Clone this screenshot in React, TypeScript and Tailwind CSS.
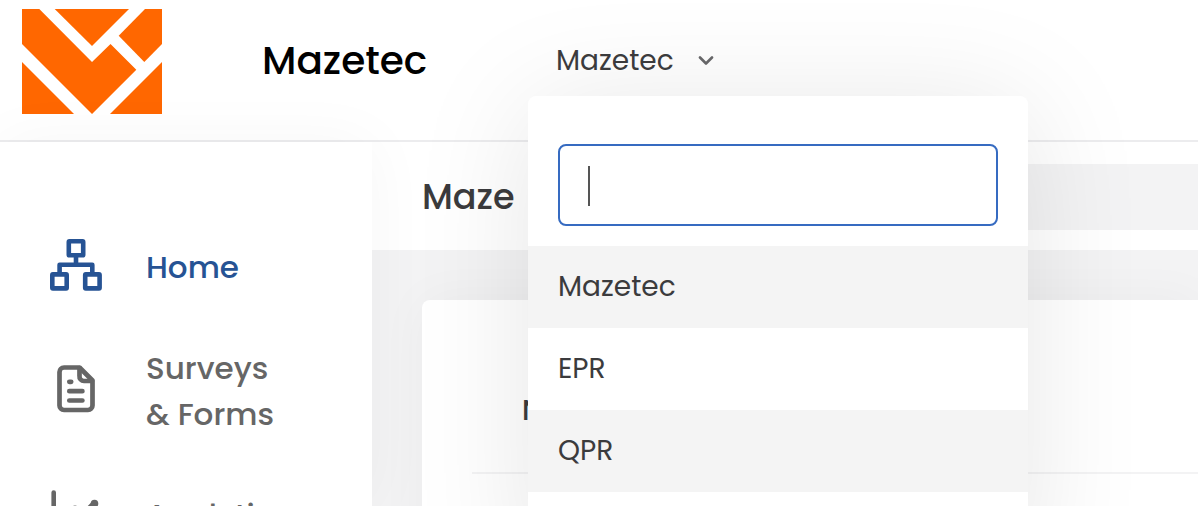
import React, { useState } from "react";

type NavItem = {
  label: string;
  icon: React.ReactNode;
  active?: boolean;
};

const WORKSPACES = ["Mazetec", "EPR", "QPR"];

const Logo: React.FC = () => (
  <svg width="140" height="106" viewBox="0 -1 140 106" fill="#ff6700" aria-label="Mazetec logo">
    <path d="M0 0H17.3L70 53L88.5 35L114.3 60.7L70 105L0 35Z" />
    <path d="M32.7 0H107L70 37Z" />
    <path d="M123 0H140V35L122.3 53L96.7 26.7Z" />
    <path d="M0 53L52 105H0Z" />
    <path d="M140 53V105H88Z" />
  </svg>
);

const HomeIcon: React.FC = () => (
  <svg width="52" height="56" viewBox="0 0 52 56" fill="none" stroke="currentColor" strokeWidth="4.6" strokeLinejoin="round">
    <rect x="18.8" y="2.3" width="14.4" height="14" rx="0.6" />
    <rect x="2.3" y="35.4" width="14.4" height="14" rx="0.6" />
    <rect x="35.2" y="35.4" width="14.4" height="14" rx="0.6" />
    <path d="M26 17V25.8M9.6 35V25.8H42.3V35" />
  </svg>
);

const FormIcon: React.FC = () => (
  <svg width="52" height="56" viewBox="0 0 52 56" fill="none" stroke="currentColor" strokeWidth="4.7" strokeLinecap="round" strokeLinejoin="round">
    <path d="M29.5 4.5H14A4.5 4.5 0 0 0 9.5 9V42.5A4.5 4.5 0 0 0 14 47H38A4.5 4.5 0 0 0 42.5 42.5V17.5Z" />
    <path d="M29.5 5V13A4.5 4.5 0 0 0 34 18H42" />
    <path d="M19.3 18.8H21.2M19.3 28.2H32.4M19.3 37.5H32.4" />
  </svg>
);

const ChartIcon: React.FC = () => (
  <svg width="52" height="56" viewBox="0 0 52 56" fill="none" stroke="currentColor" strokeWidth="4.6" strokeLinecap="round" strokeLinejoin="round">
    <path d="M3.7 5.5V43A5 5 0 0 0 8.7 48H49" />
    <path d="M14 33L25 22L33 27L44 16" />
    <circle cx="44.5" cy="16.5" r="1.5" />
    <circle cx="25" cy="22" r="1.2" />
  </svg>
);

const NAV_ITEMS: NavItem[] = [
  { label: "Home", icon: <HomeIcon />, active: true },
  { label: "Surveys & Forms", icon: <FormIcon /> },
  { label: "Analytics", icon: <ChartIcon /> },
];

const WorkspaceSwitcher: React.FC = () => {
  const [open, setOpen] = useState(true);
  const [query, setQuery] = useState("");
  const [selected, setSelected] = useState("Mazetec");

  const matches = WORKSPACES.filter(name => name.toLowerCase().includes(query.toLowerCase()));

  return (
    <div className="relative">
      <button
        type="button"
        aria-expanded={open}
        onClick={() => setOpen(!open)}
        className="relative z-40 flex items-center gap-6 px-7 text-[28px] leading-10 text-[#3b3b3d]"
      >
        {selected}
        <svg width="16" height="10" viewBox="0 0 16 10" fill="none" stroke="#666668" strokeWidth="2.6" strokeLinecap="round" strokeLinejoin="round">
          <path d="M2 1.5L8 7.5L14 1.5" />
        </svg>
      </button>
      {open && (
        <div className="absolute left-0 top-full z-30 mt-[15px] w-[500px] rounded-lg bg-white pt-12 pb-20 shadow-[0_10px_120px_rgba(0,0,0,0.1)]">
          <div className="relative mx-[30px] mb-5">
            <input
              type="text"
              aria-label="Search workspaces"
              value={query}
              onChange={e => setQuery(e.target.value)}
              className="block h-[82px] w-full rounded-lg border-2 border-[#366bc1] bg-white px-7 text-[28px] text-[#3b3b3d] caret-transparent outline-none"
            />
            {query === "" && <span className="absolute left-[30px] top-[22px] h-10 w-0.5 bg-[#555555]" />}
          </div>
          <ul>
            {matches.map(name => (
              <li key={name} className="odd:bg-[#f4f4f4]">
                <button
                  type="button"
                  onClick={() => {
                    setSelected(name);
                    setOpen(false);
                  }}
                  className="h-[82px] w-full px-[30px] text-left text-[28px] leading-10 text-[#3b3b3d]"
                >
                  {name}
                </button>
              </li>
            ))}
          </ul>
        </div>
      )}
    </div>
  );
};

const Sidebar: React.FC = () => (
  <nav className="relative z-10 w-[372px] shrink-0 bg-white pt-[102px] shadow-[0_0_60px_rgba(0,0,0,0.04)]">
    <ul className="flex flex-col gap-[55px]">
      {NAV_ITEMS.map(item => (
        <li key={item.label}>
          <a
            href="#"
            className={`flex items-center gap-11 pl-[50px] pr-20 text-[31px] leading-[46px] font-medium ${
              item.active ? "text-[#265394]" : "text-[#666666]"
            }`}
          >
            <span className="-my-2 flex shrink-0">{item.icon}</span>
            {item.label}
          </a>
        </li>
      ))}
    </ul>
  </nav>
);

const App: React.FC = () => {
  return (
    <div className="flex h-screen flex-col overflow-hidden bg-white font-['Poppins',Inter,sans-serif]">
      <header className="relative flex shrink-0 items-center border-b-2 border-[#ececee] pl-[22px] pt-2 pb-[26px]">
        <Logo />
        <h1 className="ml-[100px] w-[266px] shrink-0 text-[39px] leading-[56px] font-medium text-black">Mazetec</h1>
        <div className="z-30">
          <WorkspaceSwitcher />
        </div>
      </header>
      <div className="flex min-h-0 grow">
        <Sidebar />
        <main className="min-w-0 grow bg-[#f3f3f4]">
          <div className="flex h-[108px] items-center justify-between bg-white pt-0.5 pl-[50px]">
            <h2 className="text-[35px] leading-[48px] font-medium text-[#3b3b3d]">Maze</h2>
            <input type="search" aria-label="Search" className="h-[66px] w-2/5 bg-[#f3f3f4] px-6 text-[28px]" />
          </div>
          <section className="ml-[50px] mt-[50px] h-full rounded-tl-lg bg-white pl-[50px] shadow-[0_0_50px_rgba(0,0,0,0.04)]">
            <div className="border-b-2 border-[#f3f3f4] pt-[91px] pb-[41px] pl-[50px]">
              <h3 className="text-[28px] leading-10 font-medium text-[#3b3b3d]">N</h3>
            </div>
          </section>
        </main>
      </div>
    </div>
  );
};

export default App;
